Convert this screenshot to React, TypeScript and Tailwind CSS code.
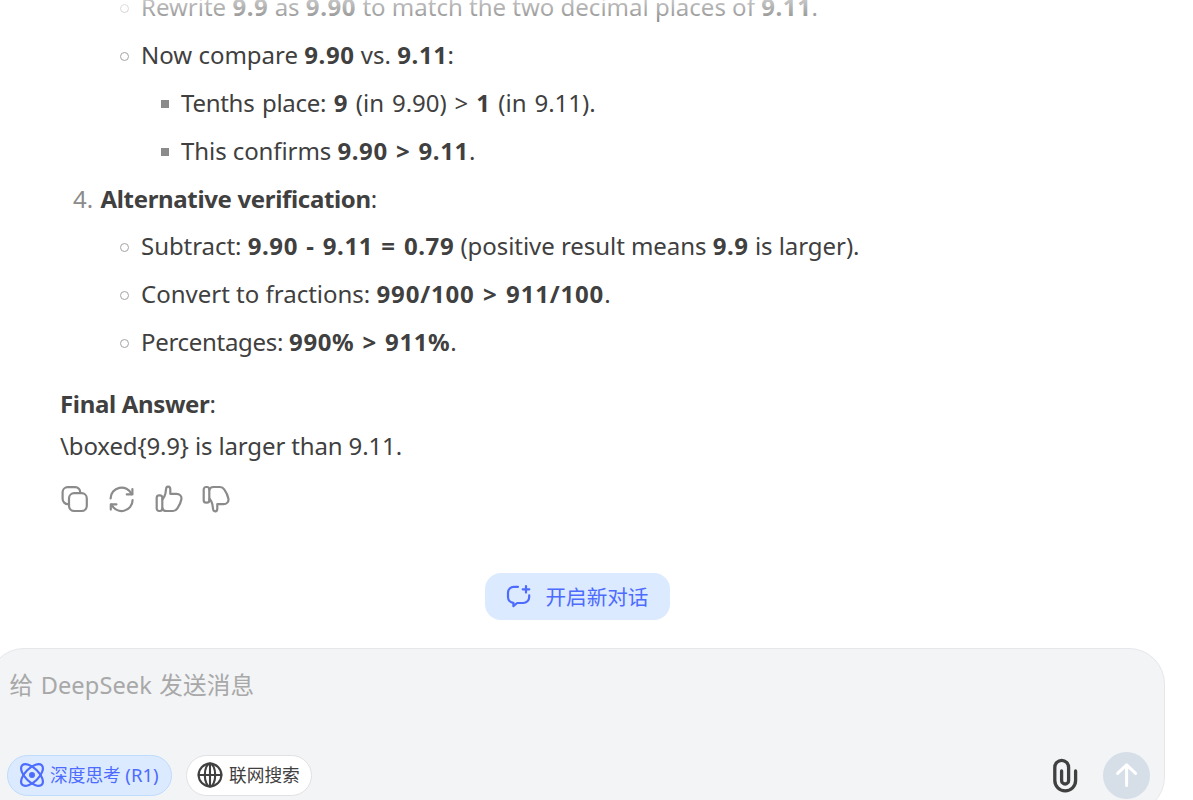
import React from 'react';

type LineProps = { className?: string; children: React.ReactNode };

// bold prose
const B = ({ children }: { children: React.ReactNode }) => (
  <strong className="font-bold tracking-[-0.34px]">{children}</strong>
);

// bold figures, set a bit looser
const N = ({ children }: { children: React.ReactNode }) => (
  <strong className="font-bold tracking-[0.6px] [word-spacing:1.4px]">{children}</strong>
);

function CircleItem({ className = '', children }: LineProps) {
  return (
    <li className="flex h-12 items-center pl-[60px]">
      <span className="mt-[3px] mr-[12px] h-[9px] w-[9px] shrink-0 rounded-full border border-[#a3a3a3]" />
      <span className={`whitespace-nowrap ${className}`}>{children}</span>
    </li>
  );
}

function SquareItem({ className = '', children }: LineProps) {
  return (
    <li className="flex h-12 items-center pl-[101px]">
      <span className="mt-[2px] mr-[12px] h-2 w-2 shrink-0 bg-[#8b8b8b]" />
      <span className={`whitespace-nowrap ${className}`}>{children}</span>
    </li>
  );
}

const iconProps = {
  fill: 'none',
  stroke: 'currentColor',
  strokeLinecap: 'round' as const,
  strokeLinejoin: 'round' as const,
};

const CopyIcon = () => (
  <svg width="28" height="28" viewBox="0 0 28 28" strokeWidth="2.2" {...iconProps}>
    <rect x="8" y="8.2" width="17.8" height="17.8" rx="5.2" />
    <path d="M19.2 7.6A5 5 0 0 0 14.2 2.2H6.6A5 5 0 0 0 1.6 7.2V13.8A5.4 5.4 0 0 0 7 19.2" />
  </svg>
);

const RefreshIcon = () => (
  <svg width="28" height="28" viewBox="0 0 28 28" strokeWidth="2.2" {...iconProps}>
    <path d="M2.6 13.4A11 11 0 0 1 23.6 9" />
    <path d="M24.4 4V9.4H18.8" />
    <path d="M24.6 15A11 11 0 0 1 3.6 19.6" />
    <path d="M2.8 24.6V19.4H8.4" />
  </svg>
);

const ThumbIcon = ({ down = false }: { down?: boolean }) => (
  <svg width="28" height="28" viewBox="0 0 28 28" strokeWidth="2.2" className={down ? '-scale-y-100' : ''} {...iconProps}>
    <rect x="1.7" y="10.4" width="5.6" height="15.6" rx="2.4" />
    <path d="M7.6 14.2C9 12.6 9.9 10.6 10.4 8.4L11.1 3.8C11.5 0.8 15.2 1 15.3 4.4V8.8H21.4C24.8 8.8 26.9 11.2 26.4 14.2C25.8 17.4 24.4 20.6 22.4 23.4C21.2 25.2 20 26 18 26H11.4C9.2 26 7.8 25 7.4 23.2" />
  </svg>
);

const NewChatIcon = () => (
  <svg width="26" height="24" viewBox="0 0 26 24" strokeWidth="2.2" {...iconProps}>
    <path d="M12 2.8H7.8A5.8 5.8 0 0 0 2 8.6V13A5.8 5.8 0 0 0 7.4 18.8V22.2L11.2 19H17.2A6 6 0 0 0 23.2 13V11.4" />
    <path d="M20 2V8.6M16.7 5.3H23.3" />
  </svg>
);

const AtomIcon = () => (
  <svg width="26" height="26" viewBox="0 0 26 26" strokeWidth="2.2" {...iconProps}>
    <ellipse cx="13" cy="13" rx="13.8" ry="6.8" transform="rotate(45 13 13)" />
    <ellipse cx="13" cy="13" rx="13.8" ry="6.8" transform="rotate(-45 13 13)" />
    <circle cx="13" cy="13" r="1.9" fill="currentColor" />
  </svg>
);

const GlobeIcon = () => (
  <svg width="26" height="26" viewBox="0 0 26 26" strokeWidth="2.1" {...iconProps}>
    <circle cx="13" cy="13" r="11.4" />
    <ellipse cx="13" cy="13" rx="5.2" ry="11.4" />
    <path d="M13 1.6V24.4M1.6 13H24.4" />
  </svg>
);

const ClipIcon = () => (
  <svg width="26" height="35" viewBox="0 0 26 35" strokeWidth="3.3" {...iconProps}>
    <path d="M23.6 13V22.6A10.4 10.2 0 0 1 2.8 22.6V9.4A6.9 7 0 0 1 16.6 9.4V22.4A3.5 3.6 0 0 1 9.6 22.4V13" />
  </svg>
);

export default function App() {
  return (
    <div className="relative flex h-[800px] w-[1193px] flex-col overflow-hidden bg-white font-['Noto_Sans','Noto_Sans_CJK_SC',sans-serif] text-[#404040]">
      <main className="-mt-[17px] pl-[60px] text-2xl leading-[42px]">
        <ul>
          <CircleItem>
            Rewrite <N>9.9</N> as <N>9.90</N> to match the two decimal places of <N>9.11</N>.
          </CircleItem>
          <CircleItem>
            Now compare <N>9.90</N> vs. <N>9.11</N>:
          </CircleItem>
          <SquareItem className="[word-spacing:1.6px]">
            <span className="tracking-[-0.28px]">Tenths place: </span><N>9</N> (in 9.90) &gt; <N>1</N> (in 9.11).
          </SquareItem>
          <SquareItem className="tracking-[-0.08px]">
            This confirms <N>9.90 &gt; 9.11</N>.
          </SquareItem>
          <li className="flex h-[47.4px] items-center pl-[13px]">
            <span className="w-[27.5px] text-[#8b8b8b]">4.</span>
            <span><B>Alternative verification</B>:</span>
          </li>
          <CircleItem className="tracking-[-0.05px]">
            Subtract: <N>9.90 - 9.11 = 0.79</N> (positive result means <N>9.9</N> is larger).
          </CircleItem>
          <CircleItem>
            Convert to fractions: <strong className="font-bold tracking-[0.82px] [word-spacing:1.4px]">990/100 &gt; 911/100</strong>.
          </CircleItem>
          <CircleItem className="tracking-[-0.3px]">
            Percentages: <N>990% &gt; 911%</N>.
          </CircleItem>
        </ul>
        <p className="mt-[17px] leading-[41.4px]">
          <B>Final Answer</B>:<br />
          <span className="tracking-[-0.14px]">\boxed{'{9.9}'} is larger than 9.11.</span>
        </p>
        <div className="mt-[18.4px] flex gap-[19px] pl-px text-[#8b8b8b]">
          <CopyIcon />
          <RefreshIcon />
          <ThumbIcon />
          <ThumbIcon down />
        </div>
      </main>

      <button className="mt-[60px] ml-[485px] flex h-[47px] w-[185px] shrink-0 items-center rounded-[16px] bg-[#dbeafe] pl-[21px] text-[20.6px] text-[#4d6bfe]">
        <NewChatIcon />
        <span className="mt-[2px] ml-[13.5px] whitespace-nowrap">开启新对话</span>
      </button>

      <section className="mt-[28px] -ml-3 flex h-[165px] w-[1177px] shrink-0 flex-col rounded-[36px] border border-[#e5e7eb] bg-[#f3f4f6]">
        <div className="mt-[16px] ml-[20.5px] text-[23.6px] leading-[40px] tracking-[0.1px] text-[#a8a8a8] [word-spacing:1.2px]">给 DeepSeek 发送消息</div>
        <div className="mt-[47px] flex h-[47px] items-center pr-[14px] pl-[18px]">
          <button className="flex h-[41px] w-[165px] items-center rounded-full border border-[#bfdbfe] bg-[#dbeafe] pl-[11px] text-[17.7px] text-[#4d6bfe]">
            <AtomIcon />
            <span className="-mt-px ml-[5px] whitespace-nowrap">深度思考 <span className="text-[18.5px]">(R1)</span></span>
          </button>
          <button className="ml-[14px] flex h-[41px] w-[126px] items-center rounded-full border border-[#dfe1e4] bg-white pl-[10px] text-[17.7px]">
            <GlobeIcon />
            <span className="ml-[6px] whitespace-nowrap">联网搜索</span>
          </button>
          <div className="ml-auto flex items-center gap-[25px]">
            <ClipIcon />
            <button className="flex h-[47px] w-[47px] items-center justify-center rounded-full bg-[#d6dee8] text-white">
              <svg width="24" height="26" viewBox="0 0 24 26" strokeWidth="3" {...iconProps}>
                <path d="M11.6 23.6V2.8M2.6 11.4L11.6 2.8L20.6 11.4" />
              </svg>
            </button>
          </div>
        </div>
      </section>

      {/* scroll fade at the top of the thread */}
      <div className="absolute inset-x-0 top-0 h-[26px] bg-linear-to-b from-white/70 to-white/35" />
    </div>
  );
}
